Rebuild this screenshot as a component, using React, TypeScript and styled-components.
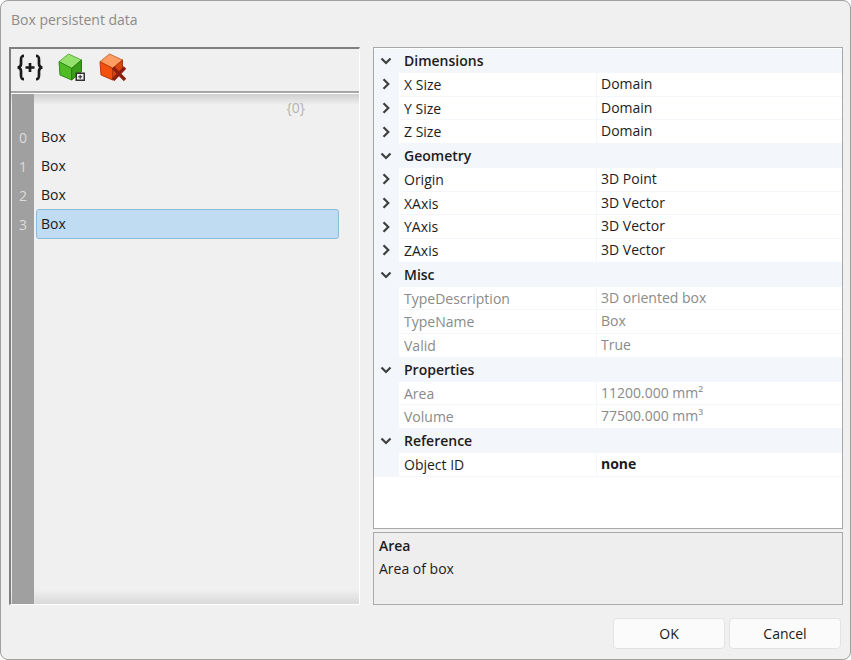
import React from 'react'
import styled, { createGlobalStyle } from 'styled-components'

const GlobalStyle = createGlobalStyle`
  html, body {
    margin: 0;
    background: #fff;
  }
  body {
    font-family: "Open Sans", "Noto Sans", sans-serif;
    font-size: 14px;
    color: #1a1a1a;
  }
`

const Dialog = styled.div`
  box-sizing: border-box;
  width: 851px;
  height: 660px;
  display: flex;
  flex-direction: column;
  background: #f0f0f0;
  border: 1px solid #a0a09e;
  border-radius: 8px;
  overflow: hidden;
`

const TitleBar = styled.div`
  height: 46px;
  flex: none;
  box-sizing: border-box;
  padding: 9px 0 0 10px;
  line-height: 20px;
  font-size: 14px;
  color: #8b8b8b;
`

const Main = styled.div`
  display: grid;
  grid-template-columns: 351px 470px;
  gap: 13px;
  padding-left: 8px;
  height: 558px;
  flex: none;
`

const DataPanel = styled.div`
  display: flex;
  flex-direction: column;
  box-sizing: border-box;
  border-top: 2px solid #7f7f7f;
  border-left: 2px solid #7f7f7f;
  border-right: 1px solid #fff;
  border-bottom: 1px solid #fff;
`

const Toolbar = styled.div`
  height: 44px;
  flex: none;
  box-sizing: border-box;
  display: flex;
  align-items: flex-start;
  gap: 13px;
  padding: 4px 0 0 5px;
  border-bottom: 2px solid #a6a6a6;
  box-shadow: 0 1px 0 #fff;
`

const IconSvg = styled.svg`
  width: 28px;
  height: 28px;
  flex: none;
  display: block;
`

const TreeArea = styled.div`
  flex: 1;
  min-height: 0;
  display: flex;
  margin-top: 1px;
  padding-left: 1px;
  background:
    linear-gradient(#cfcfcf, rgba(240, 240, 240, 0)) top / 100% 11px no-repeat,
    linear-gradient(rgba(240, 240, 240, 0), #d9d9d9) bottom / 100% 14px no-repeat,
    #f0f0f0;
`

const Gutter = styled.div`
  width: 22px;
  flex: none;
  padding-top: 29px;
  background: #a0a0a0;
`

const GutterCell = styled.div`
  height: 29px;
  line-height: 29px;
  text-align: center;
  color: #dcdcdc;
`

const TreeBody = styled.div`
  width: 303px;
  margin-left: 2px;
`

const BranchLabel = styled.div`
  height: 29px;
  line-height: 28px;
  text-align: right;
  padding-right: 34px;
  color: #b4b4b4;
`

const TreeRow = styled.div<{ $selected?: boolean }>`
  box-sizing: border-box;
  height: ${p => (p.$selected ? '30px' : '29px')};
  margin-top: ${p => (p.$selected ? '-1px' : '0')};
  line-height: 27px;
  padding-left: ${p => (p.$selected ? '4px' : '5px')};
  background: ${p => (p.$selected ? '#bfdcf2' : 'transparent')};
  border: ${p => (p.$selected ? '1px solid #8dbbdb' : 'none')};
  border-radius: 3px;
`

const RightColumn = styled.div`
  display: flex;
  flex-direction: column;
  gap: 3px;
`

const Grid = styled.div`
  flex: none;
  height: 482px;
  box-sizing: border-box;
  background: #fff;
  border: 1px solid #a8a8a8;
  padding-top: 1px;
`

const HeaderRow = styled.div`
  height: 23.75px;
  display: flex;
  align-items: center;
  background: #f3f6fb;
  font-weight: 600;
  color: #1c1c1c;
`

const RowGutter = styled.div`
  width: 25px;
  flex: none;
  box-sizing: border-box;
  padding-right: 1px;
  align-self: stretch;
  display: flex;
  align-items: center;
  justify-content: center;
  background: #f3f6fb;
`

const HeaderText = styled.div`
  padding-left: 5px;
`

const PropRow = styled.div`
  height: 23.75px;
  box-sizing: border-box;
  display: flex;
  border-bottom: 1px solid #f3f6fb;
`

const NameCell = styled.div<{ $muted?: boolean }>`
  width: 198px;
  flex: none;
  padding-left: 5px;
  box-sizing: border-box;
  line-height: 24px;
  border-right: 1px solid #f3f6fb;
  color: ${p => (p.$muted ? '#8a8a8a' : '#1c1c1c')};
`

const ValueCell = styled.div<{ $muted?: boolean; $bold?: boolean }>`
  padding-left: 4px;
  line-height: 22px;
  color: ${p => (p.$muted ? '#8a8a8a' : '#1c1c1c')};
  font-weight: ${p => (p.$bold ? 700 : 400)};
`

const ChevronSvg = styled.svg`
  width: 12px;
  height: 12px;
  display: block;
`

const InfoPanel = styled.div`
  flex: 1;
  box-sizing: border-box;
  background: #eeeeee;
  border: 1px solid #a9a9a9;
  padding: 3px 5px;
`

const InfoTitle = styled.div`
  font-weight: 600;
  line-height: 20px;
  color: #1c1c1c;
`

const InfoText = styled.div`
  line-height: 20px;
  margin-top: 3px;
  color: #1c1c1c;
`

const Footer = styled.div`
  display: flex;
  justify-content: flex-end;
  gap: 4px;
  padding: 13px 9px 0 0;
`

const Button = styled.button`
  width: 112px;
  height: 31px;
  box-sizing: border-box;
  padding: 0;
  background: #fbfbfb;
  border: 1px solid #e3e3e3;
  border-radius: 4px;
  font: inherit;
  color: #1a1a1a;
`

type Row = { name: string; value: string; expandable?: boolean; muted?: boolean; bold?: boolean }
type Group = { title: string; rows: Row[] }

const groups: Group[] = [
  {
    title: 'Dimensions',
    rows: [
      { name: 'X Size', value: 'Domain', expandable: true },
      { name: 'Y Size', value: 'Domain', expandable: true },
      { name: 'Z Size', value: 'Domain', expandable: true },
    ],
  },
  {
    title: 'Geometry',
    rows: [
      { name: 'Origin', value: '3D Point', expandable: true },
      { name: 'XAxis', value: '3D Vector', expandable: true },
      { name: 'YAxis', value: '3D Vector', expandable: true },
      { name: 'ZAxis', value: '3D Vector', expandable: true },
    ],
  },
  {
    title: 'Misc',
    rows: [
      { name: 'TypeDescription', value: '3D oriented box', muted: true },
      { name: 'TypeName', value: 'Box', muted: true },
      { name: 'Valid', value: 'True', muted: true },
    ],
  },
  {
    title: 'Properties',
    rows: [
      { name: 'Area', value: '11200.000 mm²', muted: true },
      { name: 'Volume', value: '77500.000 mm³', muted: true },
    ],
  },
  {
    title: 'Reference',
    rows: [{ name: 'Object ID', value: 'none', bold: true }],
  },
]

const Chevron: React.FC<{ open?: boolean }> = ({ open }) => (
  <ChevronSvg viewBox="0 0 12 12">
    <path
      d={open ? 'M1.5 3.5 L6 8 L10.5 3.5' : 'M3.5 1.2 L8.3 6 L3.5 10.8'}
      fill="none"
      stroke="#3f3f3f"
      strokeWidth="2.2"
    />
  </ChevronSvg>
)

const BracesIcon = () => (
  <IconSvg viewBox="0 0 28 28">
    <g fill="none" stroke="#1a1a1a" strokeWidth="2.7">
      <path d="M8 2.8 C5 2.8 5 4.5 5 7 L5 11 C5 13 4 14 1.8 14.5 C4 15 5 16 5 18 L5 22 C5 24.5 5 26.2 8 26.2" />
      <path d="M20 2.8 C23 2.8 23 4.5 23 7 L23 11 C23 13 24 14 26.2 14.5 C24 15 23 16 23 18 L23 22 C23 24.5 23 26.2 20 26.2" />
      <path d="M9.5 14.5 H18.5 M14 10 V19" />
    </g>
  </IconSvg>
)

const AddBoxIcon = () => (
  <IconSvg viewBox="0 0 28 28">
    <g strokeWidth="1" strokeLinejoin="round">
      <path d="M11.5 1 L24.5 7 L14.7 15.3 L2 8.7 Z" fill="#96e26e" stroke="#5fae40" />
      <path d="M2 8.7 L14.7 15.3 L14.7 27 L3 22 Z" fill="#4fbc26" stroke="#2f8a18" />
      <path d="M14.7 15.3 L24.5 7 L24.5 18.7 L14.7 27 Z" fill="#3a9e1a" stroke="#2a7a12" />
    </g>
    <rect x="18.5" y="19.5" width="9.5" height="8.5" fill="#333" />
    <rect x="20" y="21" width="6.5" height="5.5" fill="#f2f2f2" />
    <path d="M23.2 21.8 V25.8 M21.2 23.8 H25.2" stroke="#222" strokeWidth="1" />
  </IconSvg>
)

const RemoveBoxIcon = () => (
  <IconSvg viewBox="0 0 28 28">
    <g strokeWidth="1" strokeLinejoin="round">
      <path d="M11.5 1 L24.5 7 L14.7 15.3 L2 8.7 Z" fill="#ff9c62" stroke="#cf6a35" />
      <path d="M2 8.7 L14.7 15.3 L14.7 27 L3 22 Z" fill="#f2500c" stroke="#b93a08" />
      <path d="M14.7 15.3 L24.5 7 L24.5 18.7 L14.7 27 Z" fill="#d8460e" stroke="#a8360c" />
    </g>
    <path d="M15 14.5 L27 27 M27 14.5 L15 27" stroke="#8c1f12" strokeWidth="3.4" />
  </IconSvg>
)

const boxes = [0, 1, 2, 3]

export default function App() {
  return (
    <>
      <GlobalStyle />
      <Dialog>
        <TitleBar>Box persistent data</TitleBar>
        <Main>
          <DataPanel>
            <Toolbar>
              <BracesIcon />
              <AddBoxIcon />
              <RemoveBoxIcon />
            </Toolbar>
            <TreeArea>
              <Gutter>
                {boxes.map(i => (
                  <GutterCell key={i}>{i}</GutterCell>
                ))}
              </Gutter>
              <TreeBody>
                <BranchLabel>{'{0}'}</BranchLabel>
                {boxes.map(i => (
                  <TreeRow key={i} $selected={i === 3}>
                    Box
                  </TreeRow>
                ))}
              </TreeBody>
            </TreeArea>
          </DataPanel>
          <RightColumn>
            <Grid>
              {groups.map(group => (
                <React.Fragment key={group.title}>
                  <HeaderRow>
                    <RowGutter>
                      <Chevron open />
                    </RowGutter>
                    <HeaderText>{group.title}</HeaderText>
                  </HeaderRow>
                  {group.rows.map(row => (
                    <PropRow key={row.name}>
                      <RowGutter>{row.expandable && <Chevron />}</RowGutter>
                      <NameCell $muted={row.muted}>{row.name}</NameCell>
                      <ValueCell $muted={row.muted} $bold={row.bold}>
                        {row.value}
                      </ValueCell>
                    </PropRow>
                  ))}
                </React.Fragment>
              ))}
            </Grid>
            <InfoPanel>
              <InfoTitle>Area</InfoTitle>
              <InfoText>Area of box</InfoText>
            </InfoPanel>
          </RightColumn>
        </Main>
        <Footer>
          <Button>OK</Button>
          <Button>Cancel</Button>
        </Footer>
      </Dialog>
    </>
  )
}
